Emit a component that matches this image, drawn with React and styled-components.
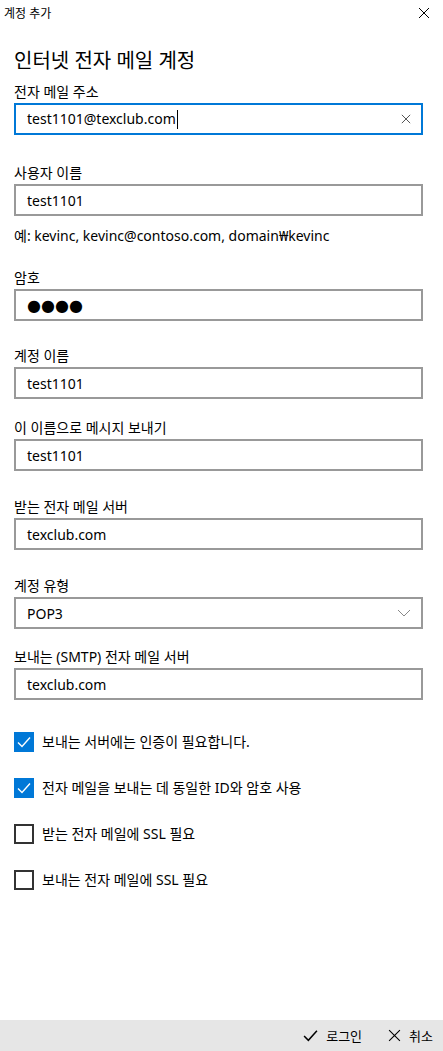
import React from 'react';
import styled, { createGlobalStyle } from 'styled-components';

const GlobalStyle = createGlobalStyle`
	html, body {
		margin: 0;
		padding: 0;
		background: #fff;
	}
	body {
		font-family: "Noto Sans", "Noto Sans CJK KR", sans-serif;
		color: #000;
	}
`;

const Page = styled.div`
	width: 443px;
	height: 1051px;
	display: flex;
	flex-direction: column;
	background: #fff;
	overflow: hidden;
`;

const TitleBar = styled.div`
	height: 26px;
	display: flex;
	align-items: center;
	justify-content: space-between;
	padding: 0 13px 0 4px;
	font-size: 12px;
	color: #000;
`;

const Body = styled.div`
	flex: 1;
	padding: 0 20px 0 14px;
`;

const Heading = styled.h1`
	margin: 21px 0 0 0;
	font-size: 20px;
	font-weight: 400;
	line-height: 28px;
`;

const Field = styled.div`
	margin-top: ${(p) => p.$top}px;
`;

const Label = styled.div`
	font-size: 14px;
	line-height: 20px;
	margin-bottom: 1px;
`;

const Box = styled.div`
	box-sizing: border-box;
	height: 32px;
	border: 2px solid ${(p) => (p.$focused ? '#0078d7' : '#999')};
	display: flex;
	align-items: center;
	padding: 0 10px 0 11px;
	font-size: 14px;
	position: relative;
`;

const Value = styled.span`
	flex: 1;
	white-space: nowrap;
`;

const Caret = styled.span`
	display: inline-block;
	width: 1px;
	height: 19px;
	background: #000;
	vertical-align: middle;
	margin-left: 1px;
`;

const Dots = styled.span`
	flex: 1;
	font-size: 16px;
	letter-spacing: 0;
	font-family: "DejaVu Sans", sans-serif;
`;

const Hint = styled.div`
	margin-top: 10px;
	font-size: 14px;
	line-height: 20px;
`;

const Checks = styled.div`
	margin-top: 32px;
	display: flex;
	flex-direction: column;
	gap: 26px;
`;

const CheckRow = styled.div`
	display: flex;
	align-items: center;
	gap: 8px;
	font-size: 14px;
	line-height: 20px;
`;

const CheckBox = styled.span`
	box-sizing: border-box;
	width: 20px;
	height: 20px;
	display: flex;
	align-items: center;
	justify-content: center;
	background: ${(p) => (p.$on ? '#0078d7' : '#fff')};
	border: 2px solid ${(p) => (p.$on ? '#0078d7' : '#333')};
`;

const Footer = styled.div`
	height: 31px;
	background: #e6e6e6;
	display: flex;
	align-items: center;
	justify-content: flex-end;
	gap: 26px;
	padding-right: 10px;
	font-size: 13px;
`;

const FooterButton = styled.div`
	display: flex;
	align-items: center;
	gap: 8px;
`;

const Cross = ({ size = 12, color = '#000', width = 1 }) => (
	<svg width={size} height={size} viewBox="0 0 12 12">
		<path d="M1 1 L11 11 M11 1 L1 11" stroke={color} strokeWidth={width} fill="none" />
	</svg>
);

const Tick = ({ color = '#fff', size = 14 }) => (
	<svg width={size} height={size} viewBox="0 0 14 14">
		<path d="M1 7.5 L5 11.5 L13 2.5" stroke={color} strokeWidth="1.4" fill="none" />
	</svg>
);

function TextBox({ value, focused }) {
	return (
		<Box $focused={focused}>
			<Value>
				{value}
				{focused && <Caret />}
			</Value>
			{focused && <Cross size={10} color="#333" />}
		</Box>
	);
}

function Check({ on, children }) {
	return (
		<CheckRow>
			<CheckBox $on={on}>{on && <Tick />}</CheckBox>
			{children}
		</CheckRow>
	);
}

function App() {
	return (
		<Page>
			<GlobalStyle />
			<TitleBar>
				<span>계정 추가</span>
				<Cross size={12} />
			</TitleBar>
			<Body>
				<Heading>인터넷 전자 메일 계정</Heading>
				<Field $top={7}>
					<Label>전자 메일 주소</Label>
					<TextBox value="test1101@texclub.com" focused />
				</Field>
				<Field $top={28}>
					<Label>사용자 이름</Label>
					<TextBox value="test1101" />
				</Field>
				<Hint>예: kevinc, kevinc@contoso.com, domain₩kevinc</Hint>
				<Field $top={22}>
					<Label>암호</Label>
					<Box>
						<Dots>●●●●</Dots>
					</Box>
				</Field>
				<Field $top={25}>
					<Label>계정 이름</Label>
					<TextBox value="test1101" />
				</Field>
				<Field $top={19}>
					<Label>이 이름으로 메시지 보내기</Label>
					<TextBox value="test1101" />
				</Field>
				<Field $top={26}>
					<Label>받는 전자 메일 서버</Label>
					<TextBox value="texclub.com" />
				</Field>
				<Field $top={26}>
					<Label>계정 유형</Label>
					<Box>
						<Value>POP3</Value>
						<svg width="14" height="8" viewBox="0 0 14 8">
							<path d="M1 1 L7 7 L13 1" stroke="#888" strokeWidth="1" fill="none" />
						</svg>
					</Box>
				</Field>
				<Field $top={18}>
					<Label>보내는 (SMTP) 전자 메일 서버</Label>
					<TextBox value="texclub.com" />
				</Field>
				<Checks>
					<Check on>보내는 서버에는 인증이 필요합니다.</Check>
					<Check on>전자 메일을 보내는 데 동일한 ID와 암호 사용</Check>
					<Check>받는 전자 메일에 SSL 필요</Check>
					<Check>보내는 전자 메일에 SSL 필요</Check>
				</Checks>
			</Body>
			<Footer>
				<FooterButton>
					<Tick color="#000" size={15} />
					로그인
				</FooterButton>
				<FooterButton>
					<Cross size={13} />
					취소
				</FooterButton>
			</Footer>
		</Page>
	);
}

export default App;
